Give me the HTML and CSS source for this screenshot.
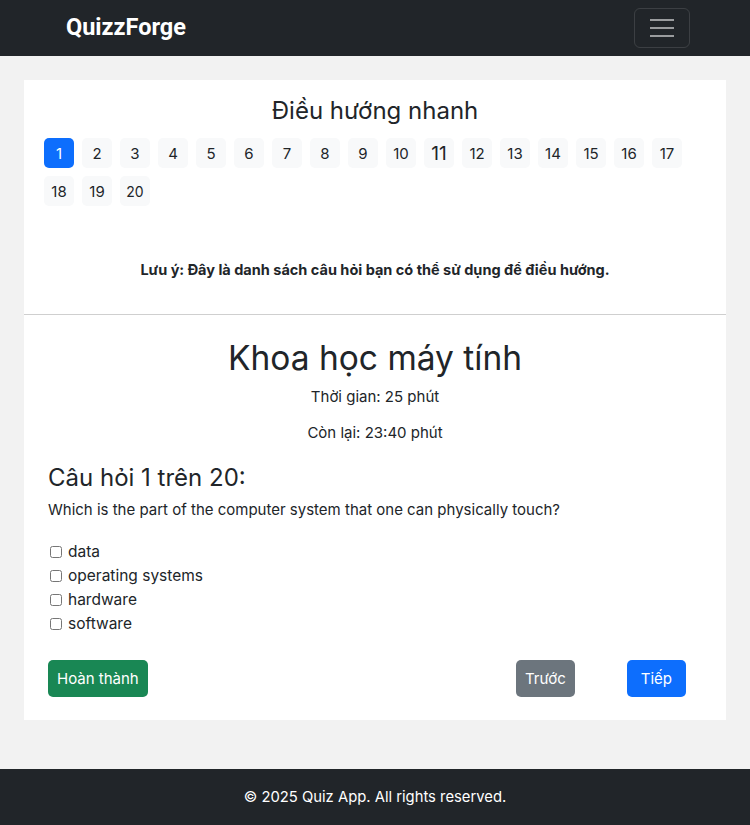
FILE: index.html
```html
<!DOCTYPE html>
<html lang="vi">
<head>
<meta charset="utf-8">
<title>QuizzForge</title>
<link rel="stylesheet" href="styles.css">
</head>
<body>
<nav class="navbar">
  <a class="brand" href="#">QuizzForge</a>
  <button class="toggler" aria-label="menu">
    <span class="bar"></span><span class="bar"></span><span class="bar"></span>
  </button>
</nav>
<main class="main">
  <div class="card">
    <section class="nav-section">
      <h4 class="nav-title">Điều hướng nhanh</h4>
      <div class="qnav">
        <button class="qbtn active">1</button>
        <button class="qbtn">2</button>
        <button class="qbtn">3</button>
        <button class="qbtn">4</button>
        <button class="qbtn">5</button>
        <button class="qbtn">6</button>
        <button class="qbtn">7</button>
        <button class="qbtn">8</button>
        <button class="qbtn">9</button>
        <button class="qbtn">10</button>
        <button class="qbtn big">11</button>
        <button class="qbtn">12</button>
        <button class="qbtn">13</button>
        <button class="qbtn">14</button>
        <button class="qbtn">15</button>
        <button class="qbtn">16</button>
        <button class="qbtn">17</button>
        <button class="qbtn">18</button>
        <button class="qbtn">19</button>
        <button class="qbtn small">20</button>
      </div>
      <p class="note">Lưu ý: Đây là danh sách câu hỏi bạn có thể sử dụng để điều hướng.</p>
    </section>
    <section class="quiz">
      <h1 class="quiz-title">Khoa học máy tính</h1>
      <p class="meta">Thời gian: 25 phút</p>
      <p class="meta">Còn lại: 23:40 phút</p>
      <h3 class="q-title">Câu hỏi 1 trên 20:</h3>
      <p class="q-text">Which is the part of the computer system that one can physically touch?</p>
      <ul class="options">
        <li><label><input type="checkbox" class="cb"> data</label></li>
        <li><label><input type="checkbox" class="cb"> operating systems</label></li>
        <li><label><input type="checkbox" class="cb"> hardware</label></li>
        <li><label><input type="checkbox" class="cb"> software</label></li>
      </ul>
      <div class="actions">
        <button class="btn btn-success">Hoàn thành</button>
        <div class="pager">
          <button class="btn btn-secondary">Trước</button>
          <button class="btn btn-primary">Tiếp</button>
        </div>
      </div>
    </section>
  </div>
</main>
<footer class="footer">© 2025 Quiz App. All rights reserved.</footer>
</body>
</html>
```
FILE: styles.css
```css
* { box-sizing: border-box; }
html, body { margin: 0; padding: 0; }
body {
  font-family: Inter, "Noto Sans", sans-serif;
  background: #f2f2f2;
  color: #212529;
  font-size: 16px;
  line-height: 1.5;
}
.navbar {
  height: 56px;
  background: #212529;
  display: flex;
  align-items: center;
  justify-content: space-between;
  padding: 0 60px 0 66px;
}
.brand {
  font-family: Roboto, sans-serif;
  font-weight: 700;
  font-size: 23.5px;
  color: #fff;
  text-decoration: none;
}
.toggler {
  width: 56px;
  height: 40px;
  background: transparent;
  border: 1px solid rgba(255,255,255,0.12);
  border-radius: 6px;
  display: flex;
  flex-direction: column;
  justify-content: center;
  align-items: center;
  gap: 6px;
  padding: 0;
}
.bar {
  display: block;
  width: 24px;
  height: 2px;
  background: rgba(255,255,255,0.55);
}
.main {
  padding: 24px 24px 49px;
}
.card {
  background: #fff;
}
.nav-section {
  padding: 16px 20px 34px;
  border-bottom: 1px solid #cfcfcf;
}
.nav-title {
  margin: 0 0 12px;
  text-align: center;
  font-weight: 400;
  font-size: 24px;
  line-height: 30px;
}
.qnav {
  display: flex;
  flex-wrap: wrap;
  gap: 8px;
}
.qbtn {
  width: 30px;
  height: 30px;
  padding: 0;
  border: none;
  border-radius: 5px;
  background: #f8f9fa;
  color: #212529;
  font-family: Inter, sans-serif;
  font-size: 15px;
}
.qbtn.active { background: #0d6efd; color: #fff; }
.qbtn.big { font-size: 19px; }
.qbtn.small { font-size: 14px; }
.note {
  margin: 54px 0 0;
  text-align: center;
  font-weight: 700;
  font-size: 14.5px;
  line-height: 20px;
}
.quiz {
  padding: 23px 24px 23px;
}
.quiz-title {
  margin: 0;
  text-align: center;
  font-weight: 400;
  font-size: 33.5px;
  line-height: 40px;
}
.meta {
  margin: 7px 0 0;
  text-align: center;
  font-size: 15px;
  line-height: 24px;
}
.meta + .meta { margin-top: 12px; }
.q-title {
  margin: 18px 0 0;
  font-weight: 400;
  font-size: 24px;
  line-height: 30px;
}
.q-text {
  margin: 6px 0 0;
  font-size: 15px;
  line-height: 22px;
}
.options {
  list-style: none;
  margin: 19px 0 0;
  padding: 0;
}
.options li {
  font-size: 15.5px;
  line-height: 24px;
  height: 24px;
}
.options label { display: flex; align-items: center; }
.cb {
  width: 12px;
  height: 12px;
  margin: 0 6px 0 2px;
}
.actions {
  display: flex;
  justify-content: space-between;
  align-items: center;
  margin-top: 24px;
  padding-right: 16px;
}
.pager {
  display: flex;
  gap: 52px;
}
.btn {
  height: 37px;
  padding: 0 9px;
  border: none;
  border-radius: 5px;
  color: #fff;
  font-family: Inter, sans-serif;
  font-size: 15px;
}
.btn-success { background: #198754; }
.btn-secondary { background: #6c757d; }
.btn-primary { background: #0d6efd; padding: 0 14px; }
.footer {
  background: #212529;
  color: #fff;
  text-align: center;
  font-size: 14.8px;
  height: 56px;
  line-height: 56px;
}
```
